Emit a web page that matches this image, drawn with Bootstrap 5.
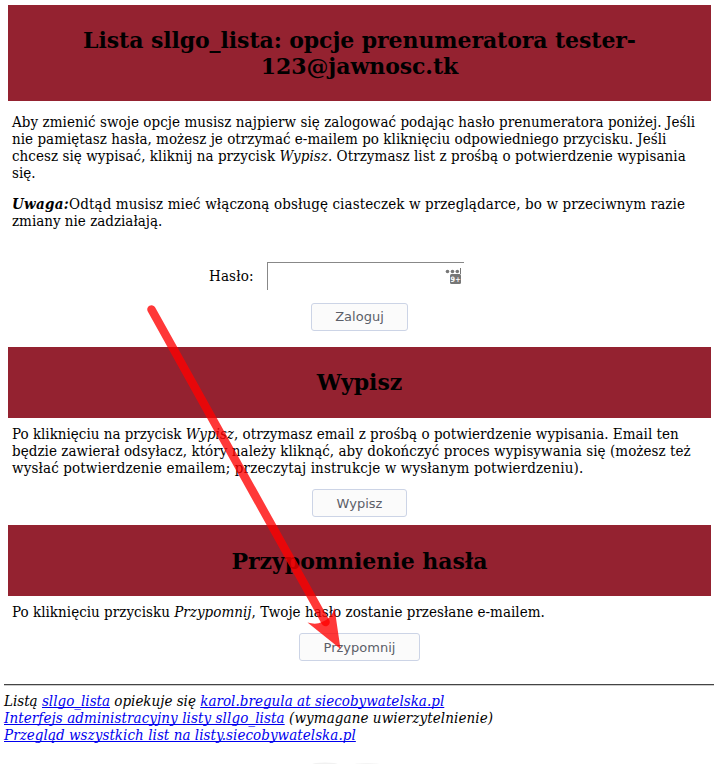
<!DOCTYPE html>
<html lang="pl">
<head>
<meta charset="utf-8">
<title>Lista sllgo_lista: opcje prenumeratora</title>
<link href="https://cdn.jsdelivr.net/npm/bootstrap@5.3.0/dist/css/bootstrap.min.css" rel="stylesheet">
<style>
html { overflow: hidden; }
body { font-family: "DejaVu Serif Condensed", "DejaVu Serif", serif; font-stretch: condensed; font-size: 15px; line-height: 17px; color: #000; height: 764px; }
.page { padding: 5px 3px 0 8px; }
.band { background: #942230; font-family: "DejaVu Serif", serif; font-stretch: normal; font-weight: 700; font-size: 22px; line-height: 26px; height: 71px; color: #000; margin: 0; letter-spacing: -.03px; }
.band-top { height: 96px; letter-spacing: -.085px; }
.band-leave { padding-bottom: 2px; }
.copy { padding: 0 4px; white-space: nowrap; }
.copy-intro { padding-top: 13px; }
.copy-intro p { margin-bottom: 14px; }
.ls-3 { letter-spacing: .03px; }
.ls-5 { letter-spacing: .052px; }
.ls-7 { letter-spacing: .09px; }
.ls-10 { letter-spacing: .11px; }
.ls-13 { letter-spacing: .13px; }
.ls-30 { letter-spacing: .3px; }
.login-row { margin-top: 32px; padding-left: 201px; }
.login-row label { letter-spacing: .15px; width: 45px; }
.login-row .form-control { width: 197px; height: 28px; margin-left: 13px; padding: 2px 2px 0; border: 0 solid #888; border-width: 1px 0 0 1px; border-radius: 0; }
.manager { right: 2px; top: 6px; width: 17px; height: 17px; }
.form-btn { font-family: "DejaVu Sans", sans-serif; font-stretch: normal; font-size: 13px; line-height: 18px; height: 28px; padding: 4px 0; color: #5b5f69; background: #fbfbfb; border: 1px solid #ccd4e6; border-radius: 3px; }
.w-login { width: 97px; margin-top: 13px; margin-bottom: 16px; }
.w-leave { width: 95px; padding-top: 5px; padding-bottom: 3px; margin-top: 12px; margin-bottom: 8px; }
.w-remind { width: 121px; padding-top: 5px; padding-bottom: 3px; margin-top: 12px; margin-bottom: 23px; }
.copy-section { padding-top: 8px; }
.rule { border-top: 1px solid #444; border-bottom: 1px solid #ccc; margin-left: 4px; }
footer { padding: 7px 0 0 4px; font-style: italic; white-space: nowrap; }
footer a { color: #0000ee; text-decoration: underline; text-decoration-skip-ink: none; }
.arrow { left: 0; top: 0; pointer-events: none; }
.emblem { display: block; margin: 16px 0 0 304px; }
</style>
<script src="https://cdn.jsdelivr.net/npm/bootstrap@5.3.0/dist/js/bootstrap.bundle.min.js"></script>
</head>
<body class="position-relative overflow-hidden bg-white">
<main class="page">
  <h1 class="band band-top d-flex align-items-center justify-content-center text-center">Lista sllgo_lista: opcje prenumeratora tester-<br>123@jawnosc.tk</h1>
  <div class="copy copy-intro">
    <p><span class="ls-5">Aby zmienić swoje opcje musisz najpierw się zalogować podając hasło prenumeratora poniżej. Jeśli</span><br><span class="ls-3">nie pamiętasz hasła, możesz je otrzymać e-mailem po kliknięciu odpowiedniego przycisku. Jeśli</span><br><span class="ls-5">chcesz się wypisać, kliknij na przycisk <em>Wypisz</em>. Otrzymasz list z prośbą o potwierdzenie wypisania</span><br>się.</p>
    <p class="mb-0"><strong class="ls-30"><em>Uwaga:</em></strong><span class="ls-10">Odtąd musisz mieć włączoną obsługę ciasteczek w przeglądarce, bo w przeciwnym razie</span><br>zmiany nie zadziałają.</p>
  </div>
  <div class="login-row d-flex align-items-center">
    <label for="pw">Hasło:</label>
    <div class="position-relative">
      <input id="pw" type="password" class="form-control shadow-none">
      <svg class="manager position-absolute" viewBox="0 0 17 17"><g fill="#777"><circle cx="2.500" cy="3.500" r="1.8"/><circle cx="7.500" cy="3.500" r="1.8"/><circle cx="12.300" cy="3.500" r="1.8"/><path d="M15 0h1v6h-1z"/><rect x="5" y="6" width="11" height="10" rx="1.5"/></g><text x="5.600" y="14" font-family="DejaVu Sans" font-size="7.5" font-weight="bold" fill="#fff" textLength="10" lengthAdjust="spacingAndGlyphs">9+</text></svg>
    </div>
  </div>
  <button class="btn form-btn w-login d-block mx-auto">Zaloguj</button>
  <h2 class="band band-leave d-flex align-items-center justify-content-center">Wypisz</h2>
  <div class="copy copy-section">Po kliknięciu na przycisk <em>Wypisz</em>,<span class="ls-3"> otrzymasz email z prośbą o potwierdzenie wypisania. Email ten</span><br><span class="ls-5">będzie zawierał odsyłacz, który należy kliknąć, aby dokończyć proces wypisywania się (możesz też</span><br><span class="ls-13">wysłać potwierdzenie emailem; przeczytaj instrukcje w wysłanym potwierdzeniu).</span></div>
  <button class="btn form-btn w-leave d-block mx-auto">Wypisz</button>
  <h2 class="band d-flex align-items-center justify-content-center">Przypomnienie hasła</h2>
  <div class="copy copy-section"><span class="ls-3">Po kliknięciu przycisku <em>Przypomnij</em>, Twoje hasło zostanie przesłane e-mailem.</span></div>
  <button class="btn form-btn w-remind d-block mx-auto">Przypomnij</button>
</main>
<div class="rule"></div>
<footer>
  <div>Listą <a href="#">sllgo_lista</a> opiekuje się <a href="#" class="ls-3">karol.bregula at siecobywatelska.pl</a></div>
  <div class="ls-7"><a href="#">Interfejs administracyjny listy sllgo_lista</a> (wymagane uwierzytelnienie)</div>
  <div class="ls-5"><a href="#">Przegląd wszystkich list na listy.siecobywatelska.pl</a></div>
  <svg class="emblem" width="84" height="6"><ellipse cx="17" cy="4.5" rx="13" ry="2" fill="#f1f1f1"/><path d="M12 5.500h10M60 5.500h6" stroke="#bbb"/><ellipse cx="59" cy="5" rx="14" ry="2" fill="#f1f1f1" fill-opacity=".8"/></svg>
</footer>
<svg class="arrow position-absolute" width="714" height="764"><path d="M151.500 309.500L325.500 622" stroke="#f00" stroke-opacity=".78" stroke-width="8.500" stroke-linecap="round"/><path d="M340.500 649L307.500 622.500Q316 625 322 622Q332 618 334.500 608Z" fill="#f00" fill-opacity=".78"/></svg>
</body>
</html>
